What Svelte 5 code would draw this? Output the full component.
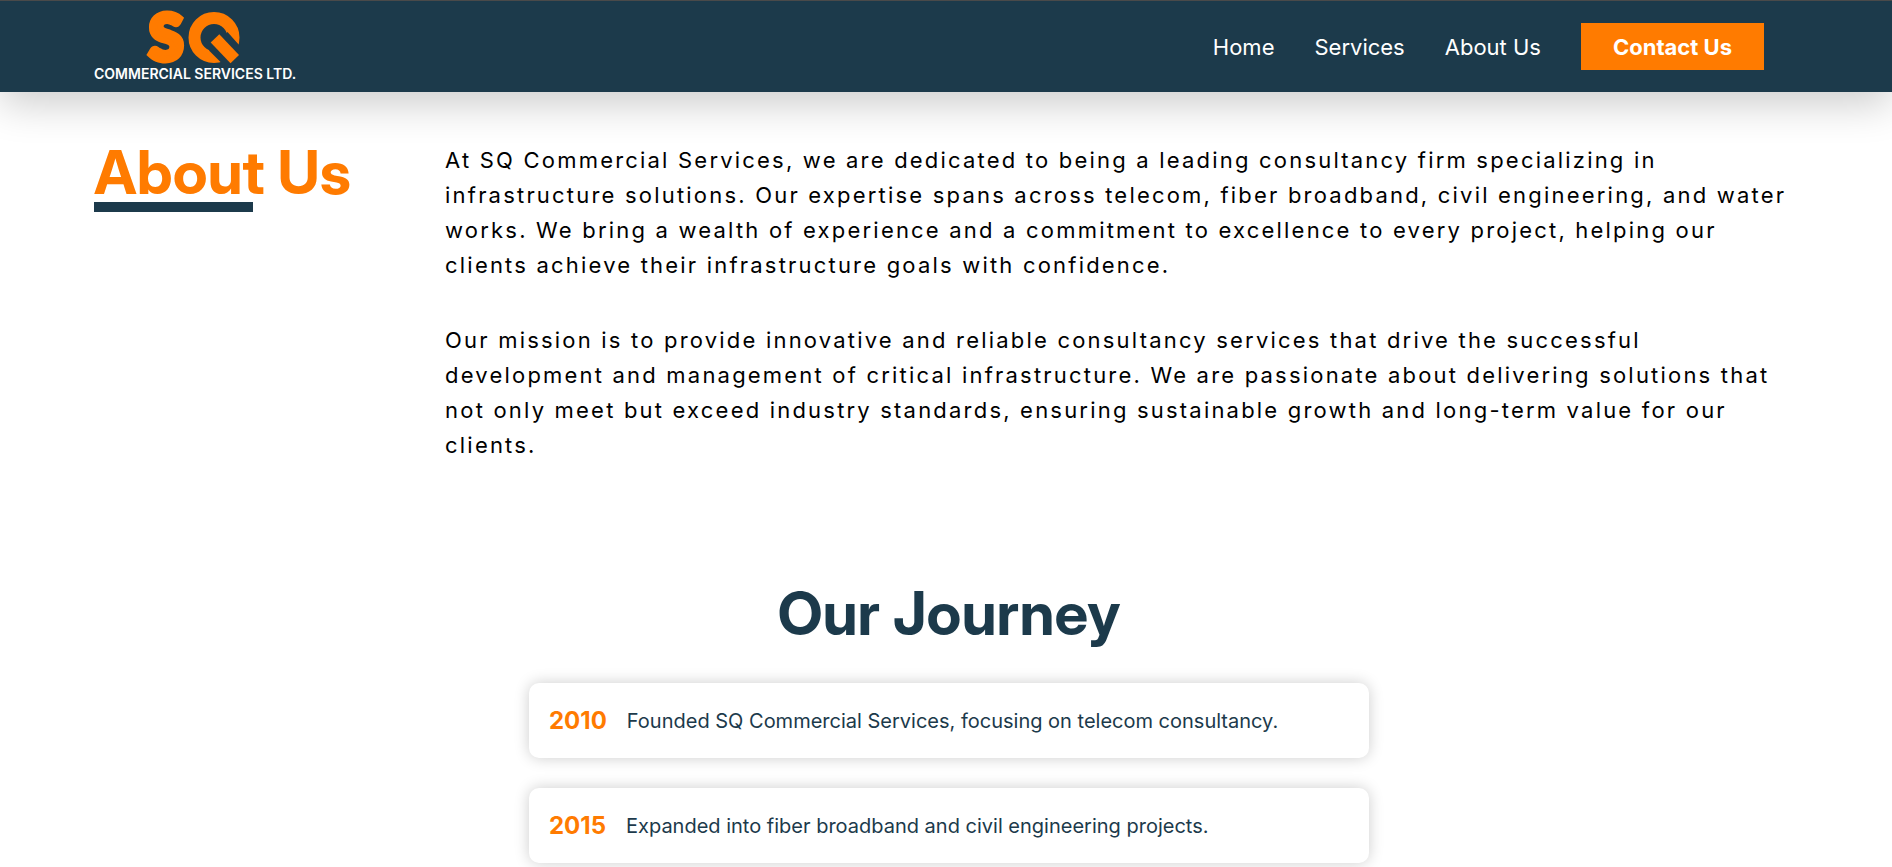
<script>
  const links = ['Home', 'Services', 'About Us'];
  const milestones = [
    { year: '2010', text: 'Founded SQ Commercial Services, focusing on telecom consultancy.' },
    { year: '2015', text: 'Expanded into fiber broadband and civil engineering projects.' }
  ];
</script>

<header>
  <a class="logo" href="#home" aria-label="SQ Commercial Services Ltd.">
    <svg width="202" height="76" viewBox="0 0 202 76">
      <text class="mark" x="55" y="51">S</text>
      <circle cx="120" cy="28.5" r="19.5" fill="none" stroke="#ff7b00" stroke-width="12" />
      <path d="M115 41.500 L133.500 23 L145.500 36.500 L150 41 V60 H133.500 Z" fill="#1c3a4b" />
      <path d="M125.300 25.300 L116.700 33.500 L136.500 54.300 L145 46 Z" fill="#ff7b00" />
      <text class="name" x="0" y="70">COMMERCIAL SERVICES LTD.</text>
    </svg>
  </a>
  <nav>
    {#each links as link}
      <a href="#{link}">{link}</a>
    {/each}
    <a class="contact" href="#contact">Contact Us</a>
  </nav>
</header>

<main>
  <section class="about">
    <h1>About Us</h1>
    <div class="copy">
      <p>
        At SQ Commercial Services, we are dedicated to being a leading consultancy firm specializing in
        infrastructure solutions. Our expertise spans across telecom, fiber broadband, civil engineering,
        and water works. We bring a wealth of experience and a commitment to excellence to every project,
        helping our clients achieve their infrastructure goals with confidence.
      </p>
      <p>
        Our mission is to provide innovative and reliable consultancy services that drive the successful
        development and management of critical infrastructure. We are passionate about delivering
        solutions that not only meet but exceed industry standards, ensuring sustainable growth and
        long-term value for our clients.
      </p>
    </div>
  </section>

  <section class="journey">
    <h2>Our Journey</h2>
    <ol>
      {#each milestones as item}
        <li><strong>{item.year}</strong><span>{item.text}</span></li>
      {/each}
    </ol>
  </section>
</main>

<style>
  :global(body) {
    margin: 0;
    background: #fff;
    font-family: Inter, sans-serif;
    overflow: hidden;
  }
  header {
    box-sizing: border-box;
    display: flex;
    align-items: center;
    justify-content: space-between;
    height: 92px;
    padding: 0 128px 0 94px;
    border-top: 1px solid #4a4a4a;
    background: #1c3a4b;
    box-shadow: 0 12px 40px rgba(0, 0, 0, 0.2);
  }
  .logo svg {
    display: block;
    overflow: visible;
  }
  .mark {
    font-family: Lato, sans-serif;
    font-size: 62px;
    font-weight: 900;
    fill: #ff7b00;
    stroke: #ff7b00;
    stroke-width: 6px;
  }
  .name {
    font-size: 14px;
    font-weight: 600;
    fill: #fff;
  }
  nav {
    display: flex;
    align-items: center;
    gap: 40px;
  }
  nav a {
    padding: 11px 0 9px;
    color: #fff;
    font-size: 22px;
    line-height: 27px;
    text-decoration: none;
  }
  nav .contact {
    padding-inline: 32px;
    background: #ff7b00;
    font-weight: 700;
  }
  .about {
    display: flex;
    align-items: flex-start;
    gap: 94px;
    padding: 51px 94px 0;
  }
  h1,
  h2 {
    margin: 0;
    font-family: 'Inter Display', Inter, sans-serif;
    font-size: 60px;
    line-height: 58px;
    font-weight: 700;
    white-space: nowrap;
  }
  h1 {
    flex: 0 0 255px;
    color: #ff7b00;
  }
  h1::after {
    content: '';
    display: block;
    width: 62%;
    height: 10px;
    margin-top: 1px;
    background: #1c3a4b;
  }
  .copy {
    flex: 1;
    color: #000;
    font-size: 22px;
    line-height: 35px;
    letter-spacing: 0.1em;
  }
  p {
    margin: 0 0 40px;
  }
  .journey {
    padding: 81px 0 40px 6px;
    color: #1c3a4b;
  }
  h2 {
    text-align: center;
  }
  ol {
    display: grid;
    gap: 30px;
    box-sizing: border-box;
    max-width: 840px;
    margin: 41px auto 0;
    padding: 0;
    list-style: none;
  }
  li {
    display: flex;
    align-items: center;
    gap: 20px;
    box-sizing: border-box;
    min-height: 75px;
    padding: 20px;
    border-radius: 10px;
    background: #fff;
    box-shadow: 0 0 15px rgba(0, 0, 0, 0.2);
    font-size: 20px;
  }
  strong {
    color: #ff7b00;
    font-size: 24px;
  }
</style>
